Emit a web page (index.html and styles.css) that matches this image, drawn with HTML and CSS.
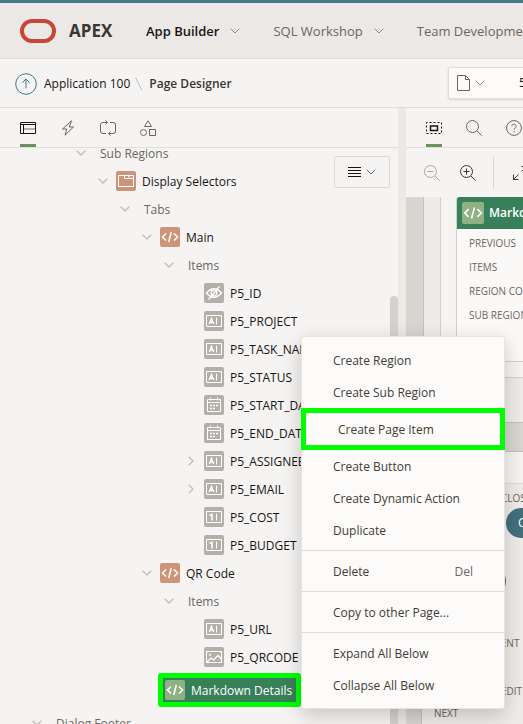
FILE: index.html
```html
<!DOCTYPE html>
<html lang="en">
<head>
<meta charset="utf-8">
<title>Page Designer</title>
<link rel="stylesheet" href="styles.css">
</head>
<body>
<svg class="sprite" aria-hidden="true">
  <symbol id="down" viewBox="0 0 10 6"><path d="M.7.7 5 5 9.3.7"/></symbol>
  <symbol id="right" viewBox="0 0 6 10"><path d="M.7.7 5 5 .7 9.3"/></symbol>
  <symbol id="code" viewBox="0 0 20 20"><path d="M6 6.5 2.5 10 6 13.500M14 6.500 17.500 10 14 13.500M11.300 5 8.700 15" stroke-width="1.500"/></symbol>
  <symbol id="tabs" viewBox="0 0 20 20"><path d="M2.500 4.500h15v11h-15zM8.500 4.500v3h9M13 4.500v3"/></symbol>
  <symbol id="hidden" viewBox="0 0 20 20"><path d="M2.500 10Q10 1.500 17.500 10 10 18.500 2.500 10zM15.500 3.500l-11 13" stroke-width="1.300"/><circle cx="10" cy="10" r="2.800" stroke-width="1.300"/></symbol>
  <symbol id="text" viewBox="0 0 20 20"><path d="M2.500 4.500h15v11h-15zM12.500 6.500v7"/><path d="M5.300 13 7.500 7.500 9.700 13M6 11.300h3" stroke-width="1.400"/></symbol>
  <symbol id="number" viewBox="0 0 20 20"><path d="M2.500 4.500h15v11h-15zM12.500 6.500v7"/><path d="M5.500 8.500 8 7.500V13.500" stroke-width="1.600"/></symbol>
  <symbol id="date" viewBox="0 0 20 20"><path d="M3.500 4.500h13v12h-13zM3.500 7.500h13M6.500 2.500v3M13.500 2.500v3"/><path d="M9 10.500h2M12 10.500h2M6 13.500h2M9 13.500h2M6 10.500h2" stroke-width="1.500"/></symbol>
  <symbol id="image" viewBox="0 0 20 20"><path d="M2.500 4.500h15v11h-15zM3 15l4-4 2.500 2L14 8.500l3.500 4" stroke-width="1.200"/><circle cx="6" cy="7.800" r=".8"/></symbol>
</svg>

<header class="topbar">
  <svg class="logo" viewBox="0 0 36 24" role="img" aria-label="Oracle"><rect x="2" y="2" width="32" height="20" rx="10"/></svg>
  <strong class="brand">APEX</strong>
  <nav class="nav">
    <a href="#" class="current">App Builder</a>
    <svg class="chevron"><use href="#down"/></svg>
    <a href="#">SQL Workshop</a>
    <svg class="chevron"><use href="#down"/></svg>
    <a href="#">Team Development</a>
  </nav>
</header>

<div class="crumbs">
  <button class="up" aria-label="Up"><svg viewBox="0 0 22 22"><circle cx="11" cy="11" r="10.300"/><path d="M11 15.500v-9M7.500 9.500 11 6l3.500 3.500"/></svg></button>
  <a href="#">Application 100</a>
  <svg class="slash" viewBox="0 0 8 14"><path d="M.5.500 7 13.500"/></svg>
  <span class="page">Page Designer</span>
  <div class="picker">
    <button class="doc" aria-label="Page finder">
      <svg class="file" viewBox="0 0 13 16"><path d="M.5.500h8l4 4v11H.5zM8.500.500v4h4"/></svg>
      <svg class="chevron"><use href="#down"/></svg>
    </button>
    <span>5</span>
  </div>
</div>

<main class="workspace">
  <section class="pane">
    <div class="tabs">
      <button class="tab active" aria-label="Rendering"><svg viewBox="0 0 16 16"><path d="M.5 2.500h15v11H.5zM.5 4.500h15M3.500 4.500v9"/><path class="faint" d="M4 9h11" stroke-width="2"/></svg></button>
      <button class="tab" aria-label="Dynamic Actions"><svg viewBox="0 0 16 16"><path d="M11.500.800 2.500 9h4.300L5 15.200 13.500 7H9.300z"/></svg></button>
      <button class="tab" aria-label="Processing"><svg viewBox="0 0 16 16"><path d="M6 13.500H3a2.500 2.500 0 0 1-2.500-2.500V4.500A2.500 2.500 0 0 1 3 2.500h4.500M5.500.500l2 2-2 2M10 2.500h3A2.500 2.500 0 0 1 15.500 5v6a2.500 2.500 0 0 1-2.500 2.500H8.500M10.500 11.500l-2 2 2 2"/></svg></button>
      <button class="tab" aria-label="Shared Components"><svg viewBox="0 0 16 16"><path d="M8 .8 11.500 6.500h-7zM9.500 9.500h6v6h-6z"/><circle cx="3.500" cy="12.500" r="3"/></svg></button>
    </div>
    <div class="tree-area">
      <ul class="tree">
        <li class="row l2"><svg class="toggle"><use href="#down"/></svg><span class="group">Sub Regions</span></li>
        <li class="row l3"><svg class="toggle"><use href="#down"/></svg><svg class="type region"><use href="#tabs"/></svg><span>Display Selectors</span></li>
        <li class="row l4"><svg class="toggle"><use href="#down"/></svg><span class="group">Tabs</span></li>
        <li class="row l5"><svg class="toggle"><use href="#down"/></svg><svg class="type region"><use href="#code"/></svg><span>Main</span></li>
        <li class="row l6"><svg class="toggle"><use href="#down"/></svg><span class="group">Items</span></li>
        <li class="row l7"><svg class="toggle"></svg><svg class="type"><use href="#hidden"/></svg><span>P5_ID</span></li>
        <li class="row l7"><svg class="toggle"></svg><svg class="type"><use href="#text"/></svg><span>P5_PROJECT</span></li>
        <li class="row l7"><svg class="toggle"></svg><svg class="type"><use href="#text"/></svg><span>P5_TASK_NAME</span></li>
        <li class="row l7"><svg class="toggle"></svg><svg class="type"><use href="#text"/></svg><span>P5_STATUS</span></li>
        <li class="row l7"><svg class="toggle"></svg><svg class="type"><use href="#date"/></svg><span>P5_START_DATE</span></li>
        <li class="row l7"><svg class="toggle"></svg><svg class="type"><use href="#date"/></svg><span>P5_END_DATE</span></li>
        <li class="row l7"><svg class="toggle side"><use href="#right"/></svg><svg class="type"><use href="#text"/></svg><span>P5_ASSIGNEE</span></li>
        <li class="row l7"><svg class="toggle side"><use href="#right"/></svg><svg class="type"><use href="#text"/></svg><span>P5_EMAIL</span></li>
        <li class="row l7"><svg class="toggle"></svg><svg class="type"><use href="#number"/></svg><span>P5_COST</span></li>
        <li class="row l7"><svg class="toggle"></svg><svg class="type"><use href="#number"/></svg><span>P5_BUDGET</span></li>
        <li class="row l5"><svg class="toggle"><use href="#down"/></svg><svg class="type region"><use href="#code"/></svg><span>QR Code</span></li>
        <li class="row l6"><svg class="toggle"><use href="#down"/></svg><span class="group">Items</span></li>
        <li class="row l7"><svg class="toggle"></svg><svg class="type"><use href="#text"/></svg><span>P5_URL</span></li>
        <li class="row l7"><svg class="toggle"></svg><svg class="type"><use href="#image"/></svg><span>P5_QRCODE</span></li>
        <li class="selected"><svg class="type"><use href="#code"/></svg><span>Markdown Details</span></li>
        <li class="row l0"><svg class="toggle"><use href="#down"/></svg><span class="group">Dialog Footer</span></li>
      </ul>
      <button class="tree-menu" aria-label="Tree menu">
        <svg class="lines" viewBox="0 0 13 12"><path d="M0 1.500h13M0 4.500h13M0 7.500h13M0 10.500h13"/></svg>
        <svg class="chevron"><use href="#down"/></svg>
      </button>
      <div class="thumb"></div>
    </div>
  </section>

  <section class="layout">
    <div class="tabs">
      <button class="tab active" aria-label="Layout"><svg viewBox="0 0 16 16"><path d="M.5 2.500h15v11H.5z" stroke-dasharray="2 2" stroke-dashoffset="1"/><path d="M4.500 6h7v4.500h-7zM4 6h8" stroke-width="1.500"/></svg></button>
      <button class="tab" aria-label="Page Search"><svg viewBox="0 0 16 16"><circle cx="6.500" cy="6.500" r="6"/><path d="m11 11 4.700 4.700"/></svg></button>
      <button class="tab" aria-label="Help"><svg viewBox="0 0 16 16"><circle cx="8" cy="8" r="7.400"/><path d="M5.800 6.300C5.800 3.500 10.200 3.500 10.200 6.300 10.200 8 8 7.800 8 9.800M8 11v1.300"/></svg></button>
    </div>
    <div class="zoombar">
      <button class="off" aria-label="Zoom out"><svg viewBox="0 0 16 16"><circle cx="6.500" cy="6.500" r="6"/><path d="m11 11 4.700 4.700M3.500 6.500h6"/></svg></button>
      <button aria-label="Zoom in"><svg viewBox="0 0 16 16"><circle cx="6.500" cy="6.500" r="6"/><path d="m11 11 4.700 4.700M3.500 6.500h6M6.500 3.500v6"/></svg></button>
      <span class="rule"></span>
      <button aria-label="Expand"><svg viewBox="0 0 16 16"><path d="M1.500 14.500 6.500 9.500M1.500 9.500v5h5M14.500 1.500l-5 5M9.500 1.500h5v5"/></svg></button>
    </div>
    <div class="canvas">
      <div class="outer">
        <div class="inner">
          <article class="card">
            <h2><svg class="type"><use href="#code"/></svg>Markdown Details</h2>
            <p>PREVIOUS</p><p>ITEMS</p><p>REGION CONTENT</p><p>SUB REGIONS</p>
          </article>
        </div>
      </div>
      <div class="footer">
        <div class="footer-head"></div>
        <div class="slot">CLOSE</div>
        <button class="pill next">Close</button>
        <button class="pill wide" aria-label="Create"></button>
        <p class="content">REGION CONTENT</p>
        <div class="slot">EDIT</div>
        <p>NEXT</p>
      </div>
    </div>
  </section>
</main>

<div class="menu" role="menu">
  <button role="menuitem">Create Region</button>
  <button role="menuitem">Create Sub Region</button>
  <button role="menuitem" class="marked">Create Page Item</button>
  <button role="menuitem">Create Button</button>
  <button role="menuitem">Create Dynamic Action</button>
  <button role="menuitem">Duplicate</button>
  <hr>
  <button role="menuitem">Delete<span class="key">Del</span></button>
  <hr>
  <button role="menuitem">Copy to other Page...</button>
  <hr>
  <button role="menuitem">Expand All Below</button>
  <button role="menuitem">Collapse All Below</button>
</div>
</body>
</html>
```
FILE: styles.css
```css
* { box-sizing: border-box; }

body {
  margin: 0;
  height: 100vh;
  display: flex;
  flex-direction: column;
  overflow: hidden;
  position: relative;
  background: #f6f4f3;
  color: #161513;
  font: 12px/16px "Open Sans", "Noto Sans", sans-serif;
}

button {
  font: inherit;
  color: inherit;
  background: none;
  border: 0;
  padding: 0;
}

a { color: inherit; text-decoration: none; }
svg { fill: none; stroke: currentColor; flex: none; }
.sprite { position: absolute; width: 0; height: 0; }
.chevron { width: 10px; height: 6px; color: #8b8580; }

.topbar {
  flex: none;
  height: 59px;
  display: flex;
  align-items: center;
  padding-left: 20px;
  border-top: 3px solid #437c88;
  border-bottom: 1px solid #e1deda;
  background: #ece8e5;
  white-space: nowrap;
  overflow: hidden;
}
.logo { width: 36px; height: 24px; color: #c74634; stroke-width: 4; }
.brand { flex: none; margin-left: 13px; width: 77px; font-size: 17px; color: #3a3632; }
.nav { flex: none; display: flex; align-items: center; font-size: 13px; color: #6b6661; }
.nav .current { font-weight: 600; color: #161513; }
.nav .chevron { margin: 0 33px 0 11px; }

.crumbs {
  flex: none;
  height: 49px;
  display: flex;
  align-items: center;
  position: relative;
  overflow: hidden;
  padding: 2px 0 0 15px;
  border-bottom: 1px solid #e1deda;
  white-space: nowrap;
}
.up { width: 22px; height: 22px; margin-right: 7px; color: #3d7886; }
.up svg { display: block; width: 22px; height: 22px; }
.slash { width: 8px; height: 14px; margin: 0 6px 0 5px; color: #c4bfba; }
.page { font-weight: 600; color: #3a3632; }
.picker {
  position: absolute;
  top: 8px;
  left: 448px;
  right: -40px;
  height: 32px;
  display: flex;
  align-items: center;
  border: 1px solid #e1deda;
  border-radius: 2px;
  background: #fcfbfa;
  box-shadow: 0 1px 2px #0002;
}
.doc { display: flex; align-items: center; gap: 5px; margin: 0 34px 0 8px; color: #6b6661; }
.file { width: 13px; height: 16px; }

.workspace {
  flex: 1;
  min-height: 0;
  display: grid;
  grid-template-columns: 398px minmax(0, 1fr);
  column-gap: 8px;
  background: #ece8e5;
}
.pane, .layout {
  min-height: 0;
  display: flex;
  flex-direction: column;
  overflow: hidden;
  background: #f6f4f3;
}
.tabs {
  flex: none;
  height: 40px;
  display: flex;
  gap: 24px;
  padding-left: 20px;
  border-bottom: 1px solid #e1deda;
}
.tab { flex: none; width: 16px; border-bottom: 3px solid transparent; color: #6b6661; }
.tab.active { border-color: #6c9160; color: #161513; }
.tab svg { display: block; width: 16px; height: 16px; margin-top: 3px; }
.tab .faint { stroke: #b5b0ab; }

.tree-area { flex: 1; min-height: 0; position: relative; overflow: hidden; }
.tree { list-style: none; margin: -9px 0 0; padding: 0; white-space: nowrap; }
.tree span { padding-top: 2px; }
.row { height: 28px; display: flex; align-items: center; }
.l0 { padding-left: 27px; }
.l2 { padding-left: 71px; }
.l3 { padding-left: 93px; }
.l4 { padding-left: 115px; }
.l5 { padding-left: 137px; }
.l6 { padding-left: 159px; }
.l7 { padding-left: 181px; }
.toggle { width: 10px; height: 6px; margin: 0 8px 0 5px; color: #c4c0bc; stroke-width: 1.500; }
.toggle.side { width: 6px; height: 10px; margin: 0 10px 0 7px; }
.tree .group { margin-left: 6px; color: #6b6661; }
.type {
  width: 20px;
  height: 20px;
  margin-right: 6px;
  border-radius: 2px;
  background: #b5afa9;
  color: #fff;
}
.type.region { background: #cc9478; }
.selected {
  width: 143px;
  height: 34px;
  display: flex;
  align-items: center;
  margin: 2px 0 2px 158px;
  padding-left: 2px;
  border: 5px solid #0f0;
  border-radius: 3px;
  background: #38805a;
  color: #fff;
}
.selected .type, .card .type { background: #8fb183; }
.tree-menu {
  position: absolute;
  top: 8px;
  right: 8px;
  width: 56px;
  height: 32px;
  display: flex;
  align-items: center;
  justify-content: center;
  gap: 5px;
  border: 1px solid #dcd9d6;
  border-radius: 2px;
}
.tree-menu .chevron { color: #4f7484; }
.lines { width: 13px; height: 12px; }
.thumb {
  position: absolute;
  top: 148px;
  right: 0;
  bottom: 0;
  width: 8px;
  border-radius: 4px 4px 0 0;
  background: #d3d2d0;
}

.zoombar { flex: none; height: 49px; display: flex; align-items: center; padding-left: 18px; }
.zoombar button { margin-right: 20px; color: #3a3632; }
.zoombar .off { color: #aaa5a0; }
.zoombar svg { display: block; width: 16px; height: 16px; }
.zoombar .rule { flex: none; width: 1px; height: 32px; margin: 0 18px 0 -3px; background: #d8d4d0; }

.canvas { flex: 1; min-height: 0; overflow: hidden; background: #d8d4d0; color: #6b6661; font-size: 10px; white-space: nowrap; }
.canvas p { margin: 0; height: 24px; line-height: 24px; }
.outer {
  margin-left: 17px;
  padding: 0 0 44px 16px;
  border: solid #c4bfba;
  border-width: 0 0 1px 1px;
  background: #efebe8;
}
.inner {
  padding: 0 0 15px 15px;
  border: solid #d3cfcb;
  border-width: 0 0 1px 1px;
  background: #f6f4f3;
}
.card {
  height: 165px;
  border: solid #d3cfcb;
  border-width: 0 0 1px 1px;
  border-radius: 3px 0 0 3px;
  overflow: hidden;
  background: #fbf9f8;
}
.card h2 {
  height: 32px;
  display: flex;
  align-items: center;
  margin: 0 0 2px;
  padding-left: 5px;
  background: #38805a;
  color: #fff;
  font-size: 12px;
  font-weight: 600;
}
.card .type { width: 22px; height: 22px; margin-right: 5px; }
.card p { padding-left: 12px; }
.footer { margin: 28px 0 0 15px; border: solid #c4bfba; border-width: 1px 0 0 1px; background: #efebe8; }
.footer-head { height: 32px; background: #f6f4f3; border-bottom: 1px solid #e1deda; }
.footer p, .wide { margin-left: 12px; }
.slot { height: 24px; margin-left: 79px; line-height: 28px; }
.pill { display: block; height: 30px; border-radius: 15px; background: #41707c; color: #fff; font-size: 12px; }
.next { margin-left: 84px; width: 66px; padding-left: 12px; text-align: left; }
.wide { width: 72px; margin-top: 28px; }
.footer .content { margin: 35px 0 22px 12px; }

.menu {
  position: absolute;
  left: 301px;
  top: 336px;
  width: 204px;
  padding: 7px 0;
  border: 1px solid #e6e3e0;
  border-radius: 3px;
  background: #fcfbfa;
  box-shadow: 0 6px 20px #0003;
  color: #403c38;
}
.menu button { width: 100%; height: 32px; display: flex; align-items: center; padding: 2px 31px 0; }
.menu .marked { width: 204px; height: 42px; margin: 0 -1px; padding-left: 32px; border: 5px solid #0f0; }
.menu hr { height: 1px; margin: 4px 0; border: 0; background: #dedbd8; }
.key { margin-left: auto; color: #6b6661; }
```
